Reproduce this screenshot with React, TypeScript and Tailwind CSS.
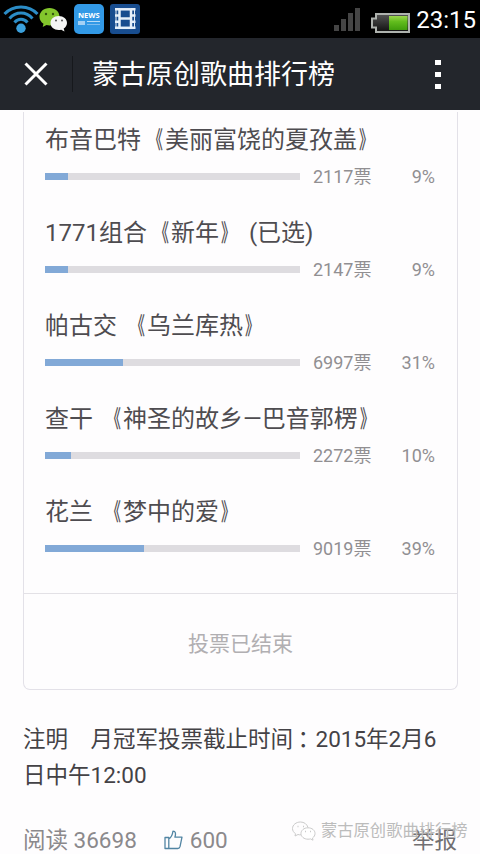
type Entry = { title: string; votes: string; percent: string; fill: string };

const entries: Entry[] = [
  { title: '布音巴特《美丽富饶的夏孜盖》', votes: '2117票', percent: '9%', fill: 'w-[23px]' },
  { title: '1771组合《新年》 (已选)', votes: '2147票', percent: '9%', fill: 'w-[23px]' },
  { title: '帕古交 《乌兰库热》', votes: '6997票', percent: '31%', fill: 'w-[78px]' },
  { title: '查干 《神圣的故乡—巴音郭楞》', votes: '2272票', percent: '10%', fill: 'w-[26px]' },
  { title: '花兰 《梦中的爱》', votes: '9019票', percent: '39%', fill: 'w-[99px]' },
];

function WifiIcon() {
  return (
    <svg className="h-[34px] w-[36px] shrink-0" viewBox="0 0 36 34" fill="none" stroke="#2b8cc6" strokeWidth="3">
      <path d="M1.500 12C10 2.500 26 2.500 34.500 12" />
      <path d="M6.500 16.500C13 9.300 23 9.300 29.500 16.500" />
      <path d="M11.500 20.500C15 16.300 21 16.300 24.500 20.500" />
      <circle cx="18" cy="26.300" r="4.700" fill="#3ba0dc" stroke="none" />
    </svg>
  );
}

function ChatIcon() {
  return (
    <svg className="h-[26px] w-[30px] shrink-0" viewBox="0 0 30 26">
      <path d="M10.500 1C4.500 1 .5 5 .5 9.800c0 3 1.600 5.500 4 7L3.700 20l3.800-2c1 .3 2 .4 3 .4 6 0 10-3.900 10-8.700S16.500 1 10.500 1z" fill="#83c62c" />
      <circle cx="7" cy="7" r="1.200" fill="#35570f" />
      <circle cx="14" cy="7" r="1.200" fill="#35570f" />
      <path d="M19.700 9c-4.800 0-8.200 3-8.200 7s3.400 7 8.200 7c.9 0 1.700-.1 2.500-.3l3.300 1.800-.8-3c2.100-1.300 3.300-3.300 3.300-5.500 0-4-3.500-7-8.300-7z" fill="#f4f5f4" />
      <circle cx="17" cy="13.500" r="1" fill="#555" />
      <circle cx="23" cy="13.500" r="1" fill="#555" />
    </svg>
  );
}

function NewsIcon() {
  return (
    <div className="flex h-[30px] w-[30px] shrink-0 flex-col rounded-[5px] bg-[#3299e6] px-[4px] pt-[7px] text-white">
      <span className="block font-['Open_Sans',sans-serif] text-[7.5px] leading-[9px] font-bold">NEWS</span>
      <div className="mt-px flex gap-[2px]">
        <div className="h-[4px] w-[7px] bg-[#a4d1f5]" />
        <div className="flex flex-col gap-[2px]">
          <div className="h-px w-[13px] bg-[#b9dcf7]" />
          <div className="h-px w-[13px] bg-[#7dbdf0]" />
        </div>
      </div>
    </div>
  );
}

function FilmIcon() {
  return (
    <svg className="h-[30px] w-[30px] shrink-0" viewBox="0 0 30 30">
      <rect width="30" height="30" rx="3" fill="#184d8f" />
      <g fill="none" stroke="#e5eff9" strokeWidth="2.500">
        <rect x="9.500" y="5.300" width="11.500" height="18.500" />
        <path d="M9.500 14.500H21" />
        <path d="M5 5.300h5M5 11.500h5M5 17.700h5M5 23.800h5M21 5.300h4.500M21 11.500h4.500M21 17.700h4.500M21 23.800h4.500" />
        <path d="M6 4v21M24.500 4v21" strokeWidth="1" />
      </g>
    </svg>
  );
}

function BatteryIcon() {
  return (
    <svg className="h-[20px] w-[40px] shrink-0" viewBox="0 0 40 20">
      <defs>
        <linearGradient id="charge" x1="0" y1="0" x2="0" y2="1">
          <stop offset="0" stopColor="#9bd64d" />
          <stop offset=".4" stopColor="#62bd1d" />
          <stop offset="1" stopColor="#3f9c0c" />
        </linearGradient>
        <linearGradient id="empty" x1="0" y1="0" x2="0" y2="1">
          <stop offset="0" stopColor="#555" />
          <stop offset="1" stopColor="#101010" />
        </linearGradient>
      </defs>
      <path d="M5 1h33v18H5v-4.500H1v-9h4z" fill="url(#empty)" stroke="#aeb2ae" strokeWidth="2" />
      <rect x="18" y="3" width="18.500" height="14" fill="url(#charge)" />
    </svg>
  );
}

function ThumbIcon() {
  return (
    <svg className="mr-[7px] h-[20px] w-[19px] shrink-0" viewBox="0 0 19 20" fill="none" stroke="#5285a3" strokeWidth="1.300" strokeLinejoin="round">
      <path d="M1 7.500h3.800v11H1zM4.800 9C7.500 7.500 8.500 4.500 9 1.200c2.800 0 3 2.600 1.900 6H18l-2 9.500c-.3 1.200-1 1.800-2.200 1.800h-9" />
    </svg>
  );
}

function WatermarkIcon() {
  return (
    <svg className="h-[20px] w-[26px] shrink-0" viewBox="0 0 26 20" fill="none" stroke="#cbcbcb" strokeWidth="1">
      <path d="M17 6.500C16 3 13 1 9.500 1 5 1 1.500 4 1.500 7.500c0 2.200 1.200 4 3 5.200L4 15l3-1.500c1 .3 2 .4 3 .3" />
      <path d="M17 6.800c-4 0-7 2.500-7 5.700s3 5.700 7 5.700c1 0 1.700-.1 2.500-.3l2.500 1.300-.5-2.200c1.500-1 2.500-2.600 2.500-4.500 0-3.200-3-5.700-7-5.700z" fill="#fff" />
      <path d="M6.500 5.500h1M12 5.500h1M14 10.500h1M19 10.500h1" strokeWidth="1.500" />
    </svg>
  );
}

// Book-title marks are set narrow, with a small gap to the text they enclose.
function Title({ text }: { text: string }) {
  return (
    <>
      {text.split(/([《》])/).map((part, i) => {
        if (part === '《') return <span key={i} className="inline-block origin-right -translate-x-[2px] scale-x-[0.6] font-medium">{part}</span>;
        if (part === '》') return <span key={i} className="inline-block origin-left translate-x-[2px] scale-x-[0.6] font-medium">{part}</span>;
        return part;
      })}
    </>
  );
}

function PollEntry({ title, votes, percent, fill }: Entry) {
  return (
    <li className="h-[93px]">
      <h2 className="h-[36px] text-[24px] leading-[36px] whitespace-pre text-[#4e4c50]"><Title text={title} /></h2>
      <div className="mt-[7px] flex h-[24px] items-center pr-px text-[18px] leading-[24px] text-[#918f92]">
        <div className="mb-px h-[7px] w-[255px] bg-[#dedce0]">
          <div className={`h-full bg-[#82a9d7] ${fill}`} />
        </div>
        <span className="ml-[13px]">{votes}</span>
        <span className="ml-auto">{percent}</span>
      </div>
    </li>
  );
}

export default function App() {
  return (
    <div className="relative flex h-[854px] w-[480px] flex-col overflow-hidden bg-[#fefdfe] font-[Roboto,'Noto_Sans_CJK_SC',sans-serif]">
      <div className="flex h-[38px] shrink-0 items-center bg-black pl-[3px]">
        <WifiIcon />
        <div className="mt-[2px]"><ChatIcon /></div>
        <div className="ml-[5px]"><NewsIcon /></div>
        <div className="ml-[6px]"><FilmIcon /></div>
        <div className="ml-auto flex h-[24px] items-end gap-[2px]">
          <div className="h-[6px] w-[5px] bg-[#454545]" />
          <div className="h-[12px] w-[5px] bg-[#454545]" />
          <div className="h-[18px] w-[5px] bg-[#454545]" />
          <div className="h-[23px] w-[5px] bg-[#454545]" />
        </div>
        <div className="mt-[7px] ml-[11px]"><BatteryIcon /></div>
        <span className="mt-[2px] mr-[4px] ml-[5px] text-[24px] leading-[36px] text-white">23:15</span>
      </div>

      <header className="flex h-[72px] shrink-0 items-center bg-[#23262c] pl-[24px] text-white">
        <svg className="h-[24px] w-[24px]" viewBox="0 0 24 24" stroke="#fff" strokeWidth="3">
          <path d="M1.500 1.500l21 21M22.500 1.500l-21 21" />
        </svg>
        <div className="ml-[24px] h-[36px] w-px bg-[#16181c]" />
        <h1 className="mt-[2px] ml-[19px] text-[27px] leading-[40px]">蒙古原创歌曲排行榜</h1>
        <div className="mr-[39px] ml-auto flex flex-col gap-[7px]">
          <i className="block h-[5px] w-[6px] bg-white" />
          <i className="block h-[5px] w-[6px] bg-white" />
          <i className="block h-[5px] w-[6px] bg-white" />
        </div>
      </header>

      <main className="flex flex-1 flex-col px-[23px]">
        <section className="mt-[2px] h-[578px] w-[435px] rounded-b-[7px] border border-t-0 border-[#e3e1e8]">
          <ul className="h-[481px] px-[21px] pt-[10px]">
            {entries.map((entry) => (
              <PollEntry key={entry.title} {...entry} />
            ))}
          </ul>
          <div className="flex h-[96px] items-center justify-center border-t border-[#e3e1e6] pt-[7px] text-[21px] text-[#b1afb2]">
            投票已结束
          </div>
        </section>
        <p className="mt-[29px] text-[22.5px] leading-[36px] whitespace-pre text-[#444246]">
          注明　月冠军投票截止时间<span className="relative top-px -left-px font-['Noto_Sans_CJK_TC',sans-serif]" lang="zh-TW">：</span>2015年2月6{'\n'}日中午12:00
        </p>
        <div className="mt-[29px] flex h-[36px] items-center text-[22.5px] leading-[36px] text-[#8b898c]">
          <span>阅读 36698</span>
          <span className="ml-[27px] flex items-center"><ThumbIcon />600</span>
          <span className="ml-auto text-[#716f72]">举报</span>
        </div>
      </main>

      <div className="absolute top-[820px] left-[291px] flex items-center gap-[4px] text-[16.3px] leading-[22px] whitespace-nowrap text-[#bcbcbc]">
        <WatermarkIcon />
        <span>蒙古原创歌曲排行榜</span>
      </div>
    </div>
  );
}
